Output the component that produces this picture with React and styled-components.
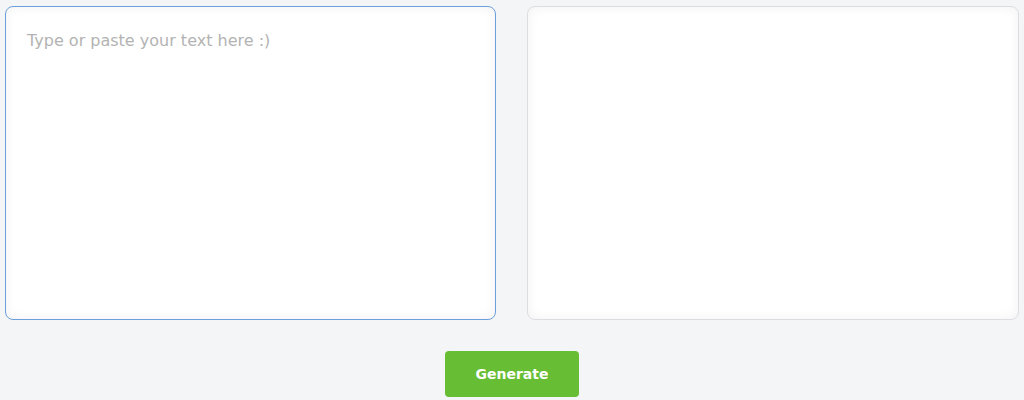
import React from "react";
import styled, { createGlobalStyle } from "styled-components";

const Global = createGlobalStyle`
  html, body { margin: 0; padding: 0; background: #f4f5f7; }
  body { font-family: "DejaVu Sans", "Noto Sans", sans-serif; }
  * { box-sizing: border-box; }
`;

const Page = styled.div`
  padding: 6px 5px 0 5px;
  display: flex;
  flex-direction: column;
  align-items: center;
`;

const Panels = styled.div`
  width: 100%;
  display: grid;
  grid-template-columns: 491px 492px;
  column-gap: 31px;
`;

const Area = styled.textarea`
  height: 314px;
  resize: none;
  border-radius: 8px;
  border: 1px solid ${(p) => (p.$focused ? "#6c9fdb" : "#dcdde0")};
  background: #ffffff;
  box-shadow: inset 0 0 12px rgba(0, 0, 0, 0.06);
  padding: 24px 21px;
  font-family: "DejaVu Sans", "Noto Sans", sans-serif;
  font-size: 16px;
  color: #333;
  outline: none;
  &::placeholder { color: #b3b3b3; }
`;

const Button = styled.button`
  margin-top: 31px;
  width: 134px;
  height: 46px;
  border: none;
  border-radius: 4px;
  background: #67bd33;
  color: #fff;
  font-family: "DejaVu Sans", "Noto Sans", sans-serif;
  font-weight: 700;
  font-size: 14px;
  cursor: pointer;
`;

export default function App() {
  return (
    <>
      <Global />
      <Page>
        <Panels>
          <Area $focused placeholder="Type or paste your text here :)" />
          <Area readOnly />
        </Panels>
        <Button>Generate</Button>
      </Page>
    </>
  );
}
